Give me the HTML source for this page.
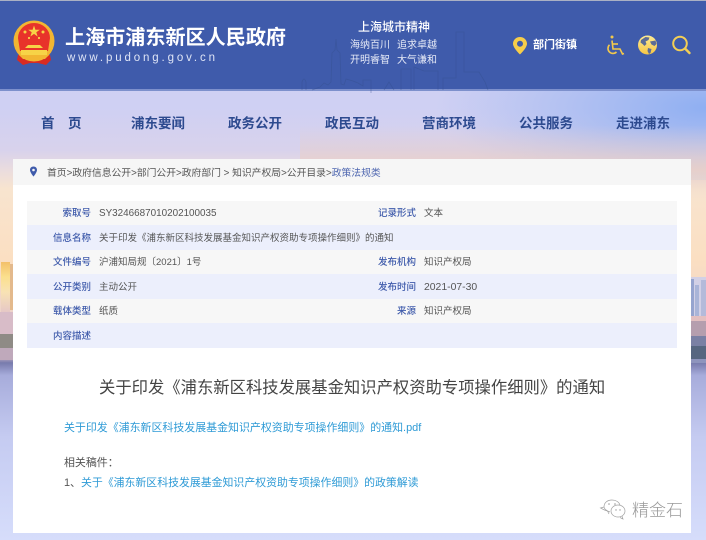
<!DOCTYPE html>
<html lang="zh-CN">
<head>
<meta charset="utf-8">
<title>关于印发《浦东新区科技发展基金知识产权资助专项操作细则》的通知</title>
<style>
html,body{margin:0;padding:0;width:706px;height:540px;overflow:hidden;background:#d5dcfb}
body{position:relative;font-family:"Liberation Sans","Noto Sans CJK SC",sans-serif;color:#555}
.t{position:absolute;white-space:nowrap;line-height:1;filter:blur(.3px)}
.bg{position:absolute;left:0;top:0}
.nav{font-size:13.5px;font-weight:700;color:#2d4a8f;top:117px}
.l{font-size:9.5px;color:#3f5bab;font-weight:500}
.v{font-size:9.5px;color:#555}
a{color:#2f9bd6;text-decoration:none}
</style>
</head>
<body>
<svg class="bg" width="706" height="540" viewBox="0 0 706 540">
<defs>
<linearGradient id="a" x1="0" y1="0" x2="0" y2="1">
<stop offset="0" stop-color="#cdd0f5"/>
<stop offset=".2" stop-color="#cfd0f3"/>
<stop offset=".278" stop-color="#d8d2ec"/>
<stop offset=".315" stop-color="#eadcde"/>
<stop offset=".35" stop-color="#f8e4cf"/>
<stop offset=".48" stop-color="#fbdfc2"/>
<stop offset=".61" stop-color="#ead0cb"/>
<stop offset=".66" stop-color="#c9b5c6"/>
<stop offset=".672" stop-color="#787bad"/>
<stop offset=".695" stop-color="#a7acdb"/>
<stop offset=".81" stop-color="#c5cbf1"/>
<stop offset="1" stop-color="#d6ddfb"/>
</linearGradient>
<radialGradient id="b" gradientUnits="userSpaceOnUse" cx="706" cy="108" r="270" gradientTransform="translate(0 70) scale(1 .35)">
<stop offset="0" stop-color="#8fafF2"/>
<stop offset="1" stop-color="#9ab4f0" stop-opacity="0"/>
</radialGradient>
<linearGradient id="p" x1="0" y1="0" x2="0" y2="1">
<stop offset="0" stop-color="#e6cfcf" stop-opacity="0"/>
<stop offset=".6" stop-color="#e9cfc8" stop-opacity=".9"/>
<stop offset="1" stop-color="#efd9cd" stop-opacity="0"/>
</linearGradient>
<linearGradient id="g" x1="0" y1="0" x2="0" y2="1">
<stop offset="0" stop-color="#fdeb94"/>
<stop offset="1" stop-color="#f6c544"/>
</linearGradient>
<linearGradient id="tw" x1="0" y1="0" x2="0" y2="1">
<stop offset="0" stop-color="#f3c06a"/>
<stop offset=".3" stop-color="#fbe08e"/>
<stop offset=".6" stop-color="#f8e2b4"/>
<stop offset="1" stop-color="#e6c8c6"/>
</linearGradient>
</defs>
<rect width="706" height="540" fill="url(#a)"/>
<rect y="90" width="706" height="90" fill="url(#b)"/>
<rect x="300" y="125" width="406" height="75" fill="url(#p)"/>
<!-- left skyline -->
<rect x="1" y="262" width="9" height="50" fill="url(#tw)"/>
<rect x="10" y="264" width="3" height="46" fill="#e3b98c"/>
<rect x="0" y="312" width="13" height="22" fill="#d8bcc8"/>
<rect x="0" y="334" width="13" height="14" fill="#8f8b86"/>
<rect x="0" y="348" width="13" height="12" fill="#bfa9bb"/>
<!-- right skyline -->
<rect x="691" y="277" width="15" height="42" fill="#d2d0e6"/>
<rect x="691" y="279" width="3" height="40" fill="#96a4cf"/>
<rect x="695" y="285" width="4" height="34" fill="#a9b4d8"/>
<rect x="701" y="280" width="5" height="39" fill="#b4bada"/>
<rect x="691" y="316" width="15" height="5" fill="#e3bfc0"/>
<rect x="691" y="321" width="15" height="15" fill="#b59eae"/>
<rect x="691" y="336" width="15" height="10" fill="#7a80a4"/>
<rect x="691" y="346" width="15" height="13" fill="#566680"/>
<rect x="691" y="359" width="15" height="4" fill="#8e94bd"/>
<!-- header -->
<rect width="706" height="90" fill="#3f5bab"/>
<rect width="706" height="1" fill="#aab1c4"/>
<rect y="89" width="706" height="2" fill="#7d90cc"/>
<!-- faint skyline in header -->
<g fill="none" stroke="#36508f" stroke-width=".8" opacity=".45">
<path d="M302 90v-8q2-6 4 0v8M312 90l8-3 4-4 4 2 3-3 1-29 3-3 1-11 1 11 3 3 1 31 3 1 2-6 7 2 5 2 5 3v-6h8v13M384 90l5-8 5 8M401 90V69h10v21M414 90V67l10 4h14v19M443 90V78h13V32h8v40h15l6 10 3 8"/>
</g>
<!-- emblem -->
<path d="M18 55l-1 5 6 5 7-2h8l8 2 5-5-1-5z" fill="#d92b22"/>
<circle cx="34" cy="41" r="20.500" fill="#f2b632"/>
<path d="M18 38a16 15 0 0 1 32 0l-2 13H20z" fill="#e8332a"/>
<path d="M34 25.500l1.400 4.200h4.400l-3.500 2.600 1.300 4.200-3.600-2.600-3.600 2.600 1.300-4.200-3.500-2.600h4.400z" fill="#f7d347"/>
<circle cx="25" cy="32" r="1.500" fill="#f7d347"/><circle cx="43" cy="32" r="1.500" fill="#f7d347"/>
<circle cx="29" cy="38" r="1.100" fill="#f7d347"/><circle cx="39" cy="38" r="1.100" fill="#f7d347"/>
<path d="M28 45h12l3 3H25z" fill="#f7d347"/>
<rect x="21" y="50" width="26" height="5" fill="#f7d347"/>
<path d="M19 55h30l-4 4H23z" fill="#f2b632"/>
<!-- main panel -->
<rect x="13" y="159" width="678" height="374" fill="#fff"/>
<rect x="13" y="159" width="678" height="26" fill="#f6f6f6"/>
<!-- table stripes -->
<rect x="27" y="201" width="650" height="24" fill="#f7f7f7"/>
<rect x="27" y="225" width="650" height="25" fill="#eceffc"/>
<rect x="27" y="250" width="650" height="24" fill="#f7f7f7"/>
<rect x="27" y="274" width="650" height="25" fill="#eceffc"/>
<rect x="27" y="299" width="650" height="24" fill="#f7f7f7"/>
<rect x="27" y="323" width="650" height="25" fill="#eceffc"/>
<!-- location pin -->
<path d="M520 37c-4 0-7 3-7 6.800 0 4.200 7 10.700 7 10.700s7-6.500 7-10.700c0-3.800-3-6.800-7-6.800zm0 3.800a3 3 0 1 1 0 6 3 3 0 0 1 0-6z" fill="#f6cd4a"/>
<!-- accessibility -->
<g fill="none" stroke="#f3c94b" stroke-width="1.600">
<circle cx="612" cy="37" r="1.500" fill="#f3c94b" stroke="none"/>
<path d="M612 40.500l1 8.500h7l2.500 5 1.500-.5"/>
<path d="M613 44h5"/>
<path d="M609.500 44.800a5 5 0 1 0 7 7.200"/>
</g>
<!-- globe -->
<circle cx="647.500" cy="45" r="9.500" fill="url(#g)"/>
<path d="M641 40l4.500-3 4 .5-1 2.500-3 1.500 1 2.500-2 2-2-2-2-1.500zM650 41.500l5.500-1 1 3.500-2 2-3-1.500zM648 48l3.500 1-1 4-1.500 1-1.500-3z" fill="#5c6c96"/>
<!-- search -->
<circle cx="680" cy="43.500" r="6.800" fill="none" stroke="#f4cf55" stroke-width="2"/>
<path d="M685 48.500l4.500 4.500" stroke="#f4cf55" stroke-width="2.400" stroke-linecap="round"/>
<!-- crumb pin -->
<path d="M33.500 166.500c-2.200 0-3.500 1.600-3.500 3.500 0 2.400 3.500 6.600 3.500 6.600s3.500-4.200 3.500-6.600c0-1.900-1.300-3.500-3.500-3.500zm0 2.200a1.300 1.300 0 1 1 0 2.600 1.300 1.300 0 0 1 0-2.600z" fill="#3f5bab"/>
<!-- wechat mark -->
<g fill="none" stroke="#a0a0a0" stroke-width=".7">
<path d="M610 512c-4-1-6-4-6-5 0-4 3-7 8-7 4 0 7 2 8 5"/>
<path d="M604 507l-3.500 1 4 2 3 1 1.500 3"/>
<ellipse cx="618" cy="511" rx="7" ry="6"/>
<path d="M622 516l1 3-3-1.500"/>
</g>
<circle cx="609" cy="504" r=".8" fill="#999"/><circle cx="615" cy="504" r=".8" fill="#999"/>
<circle cx="616" cy="510" r=".7" fill="#999"/><circle cx="620" cy="510" r=".7" fill="#999"/>
</svg>

<!-- header text -->
<div class="t" style="left:65px;top:28px;font-size:20.100px;font-weight:700;color:#fff">上海市浦东新区人民政府</div>
<div class="t" style="left:67px;top:53px;font-size:11.500px;color:#dfe5f6;letter-spacing:2.870px">www.pudong.gov.cn</div>
<div class="t" style="left:358px;top:21px;font-size:12px;font-weight:500;color:#fff">上海城市精神</div>
<div class="t" style="left:350px;top:41px;font-size:10px;color:#e6eaf7">海纳百川</div>
<div class="t" style="left:397px;top:41px;font-size:10px;color:#e6eaf7">追求卓越</div>
<div class="t" style="left:350px;top:56px;font-size:10px;color:#e6eaf7">开明睿智</div>
<div class="t" style="left:397px;top:56px;font-size:10px;color:#e6eaf7">大气谦和</div>
<div class="t" style="left:533px;top:40px;font-size:11px;font-weight:700;color:#fff">部门街镇</div>

<!-- nav -->
<div class="t nav" style="left:41px;letter-spacing:13.500px">首页</div>
<div class="t nav" style="left:131px">浦东要闻</div>
<div class="t nav" style="left:228px">政务公开</div>
<div class="t nav" style="left:325px">政民互动</div>
<div class="t nav" style="left:422px">营商环境</div>
<div class="t nav" style="left:519px">公共服务</div>
<div class="t nav" style="left:616px">走进浦东</div>

<!-- breadcrumb -->
<div class="t" style="left:47px;top:169px;font-size:9.800px;color:#555">首页&gt;政府信息公开&gt;部门公开&gt;政府部门 &gt; 知识产权局&gt;公开目录&gt;<span style="color:#4f67b0">政策法规类</span></div>

<!-- table labels -->
<div class="t l" style="right:615px;top:209px">索取号</div>
<div class="t l" style="right:615px;top:234px">信息名称</div>
<div class="t l" style="right:615px;top:258px">文件编号</div>
<div class="t l" style="right:615px;top:283px">公开类别</div>
<div class="t l" style="right:615px;top:307px">载体类型</div>
<div class="t l" style="right:615px;top:332px">内容描述</div>
<div class="t l" style="right:290px;top:209px">记录形式</div>
<div class="t l" style="right:290px;top:258px">发布机构</div>
<div class="t l" style="right:290px;top:283px">发布时间</div>
<div class="t l" style="right:290px;top:307px">来源</div>

<!-- table values -->
<div class="t v" style="left:99px;top:209px;font-size:9.900px">SY3246687010202100035</div>
<div class="t v" style="left:99px;top:234px">关于印发《浦东新区科技发展基金知识产权资助专项操作细则》的通知</div>
<div class="t v" style="left:99px;top:258px">沪浦知局规〔2021〕1号</div>
<div class="t v" style="left:99px;top:283px">主动公开</div>
<div class="t v" style="left:99px;top:307px">纸质</div>
<div class="t v" style="left:424px;top:209px">文本</div>
<div class="t v" style="left:424px;top:258px">知识产权局</div>
<div class="t v" style="left:424px;top:283px;font-size:10.400px">2021-07-30</div>
<div class="t v" style="left:424px;top:307px">知识产权局</div>

<!-- article -->
<div class="t" style="left:99px;top:380px;font-size:16.330px;color:#444">关于印发《浦东新区科技发展基金知识产权资助专项操作细则》的通知</div>
<div class="t" style="left:64px;top:423px;font-size:10.950px"><a>关于印发《浦东新区科技发展基金知识产权资助专项操作细则》的通知.pdf</a></div>
<div class="t" style="left:64px;top:458px;font-size:10.950px;color:#555">相关稿件：</div>
<div class="t" style="left:64px;top:478px;font-size:10.900px;color:#555">1、<a>关于《浦东新区科技发展基金知识产权资助专项操作细则》的政策解读</a></div>

<!-- watermark -->
<div class="t" style="left:632px;top:502px;font-size:17px;font-weight:300;color:#999">精金石</div>
</body>
</html>
